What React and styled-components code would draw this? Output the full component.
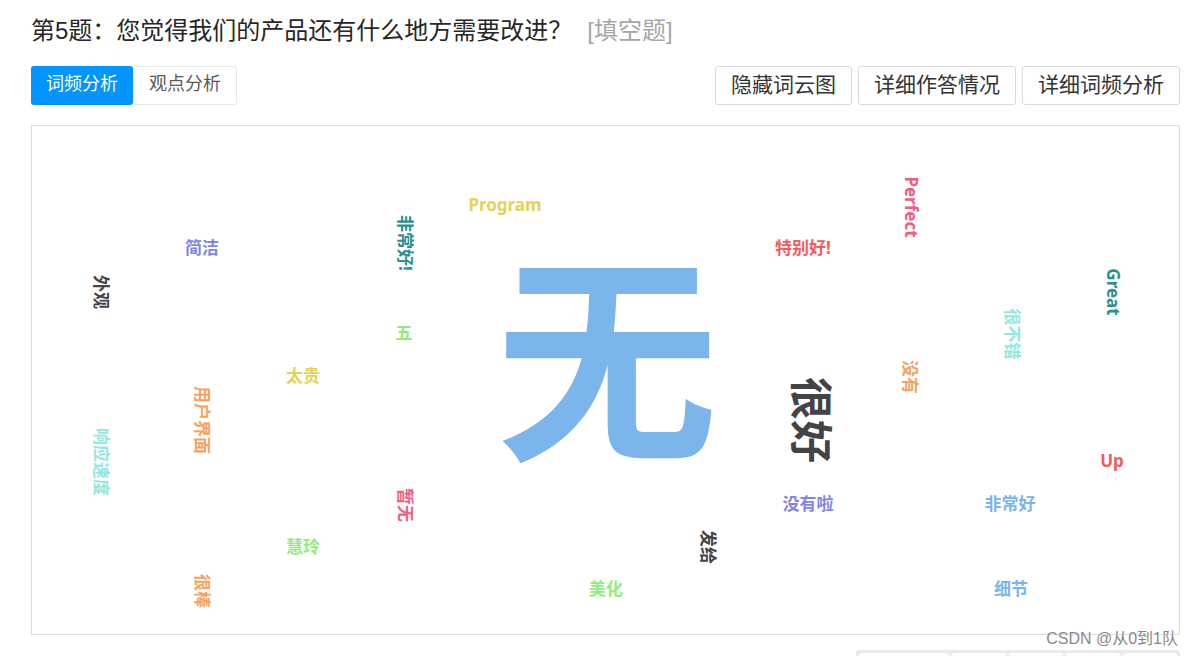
import { useState } from 'react'
import styled, { createGlobalStyle } from 'styled-components'

const GlobalStyle = createGlobalStyle`
  *,
  *::before,
  *::after {
    box-sizing: border-box;
  }

  body {
    background: #fff;
    color: #333;
    font-family: 'Liberation Sans', 'Noto Sans CJK SC', sans-serif;
    margin: 0;
  }

  button {
    font-family: inherit;
  }
`

const Page = styled.main`
  display: flex;
  flex-direction: column;
  height: 100vh;
  overflow: hidden;
  padding: 13px 14px 0 31px;
  position: relative;
`

const Title = styled.h1`
  color: #262626;
  display: flex;
  flex-shrink: 0;
  flex-wrap: wrap;
  font-size: 24px;
  font-weight: 400;
  gap: 15px;
  line-height: 36px;
  margin: 0;
`

const QuestionType = styled.span`
  color: #a6a6a6;
`

const Toolbar = styled.div`
  display: flex;
  flex-shrink: 0;
  flex-wrap: wrap;
  justify-content: space-between;
  margin: 17px 0 20px;
`

const Tabs = styled.div`
  display: flex;
`

const Tab = styled.button`
  background: ${props => props.$active ? '#0095ff' : '#fff'};
  border: ${props => props.$active ? '0' : '1px solid #e6e6e6'};
  border-radius: 3px;
  color: ${props => props.$active ? '#fff' : '#595959'};
  cursor: pointer;
  font-size: 18px;
  height: 39px;
  line-height: 35px;
  padding: 0 15px 2px;
`

const Actions = styled.div`
  display: flex;
  gap: 6px;
`

const ActionButton = styled.button`
  background: #fff;
  border: 1px solid #d9d9d9;
  border-radius: 3px;
  color: #333;
  cursor: pointer;
  font-size: 21px;
  height: 39px;
  line-height: 35px;
  padding: 0 15px 2px;
`

const CloudPanel = styled.section`
  border: 1px solid #dcdcdc;
  flex-shrink: 0;
`

const Cloud = styled.svg`
  display: block;
  width: 100%;
`

const Word = styled.text`
  fill: ${props => props.$color};
  font-family: 'Noto Sans', 'Noto Sans CJK SC', sans-serif;
  font-size: ${props => props.$size}px;
  font-weight: 700;
  text-anchor: middle;
`

const ChartTypes = styled.div`
  align-self: flex-end;
  background: #ebebeb;
  border-radius: 3px;
  display: flex;
  flex-shrink: 0;
  gap: 3px;
  margin-top: 15px;
  padding: 3px;
`

const ChartType = styled.button`
  background: #fff;
  border: 0;
  border-radius: 3px;
  height: 36px;
  padding: 0;
  width: ${props => props.$wide ? 90 : 54}px;
`

const Watermark = styled.span`
  bottom: 5px;
  color: #888;
  font-size: 16px;
  line-height: 24px;
  position: absolute;
  right: 16px;
  text-shadow: 0 0 1px #fff;
`

const tabs = ['词频分析', '观点分析']
const chartTypes = ['表格', '饼状', '圆环', '柱状', '条形']

const words = [
  { text: '无', x: 575, y: 235, size: 222, color: '#7cb5ec' },
  { text: '很好', x: 779, y: 294, size: 43, color: '#434348', vertical: true },
  { text: '美化', x: 574, y: 463, color: '#90ed7d' },
  { text: '用户界面', x: 170, y: 294, color: '#f7a35c', vertical: true },
  { text: '没有啦', x: 776, y: 378, color: '#8085e9' },
  { text: '暂无', x: 373, y: 379, color: '#f15c80', vertical: true },
  { text: 'Program', x: 473, y: 79, color: '#e4d354' },
  { text: '非常好!', x: 373, y: 117, color: '#2b908f', vertical: true },
  { text: '特别好!', x: 771, y: 122, color: '#f45b5b' },
  { text: '很不错', x: 980, y: 208, color: '#91e8e1', vertical: true },
  { text: '非常好', x: 978, y: 378, color: '#7cb5ec' },
  { text: '发给', x: 676, y: 421, color: '#434348', vertical: true },
  { text: '五', x: 372, y: 207, color: '#90ed7d' },
  { text: '没有', x: 878, y: 251, color: '#f7a35c', vertical: true },
  { text: '简洁', x: 170, y: 122, color: '#8085e9' },
  { text: 'Perfect', x: 879, y: 81, color: '#f15c80', vertical: true },
  { text: '太贵', x: 271, y: 250, color: '#e4d354' },
  { text: 'Great', x: 1081, y: 166, color: '#2b908f', vertical: true },
  { text: 'Up', x: 1080, y: 335, color: '#f45b5b' },
  { text: '响应速度', x: 69, y: 336, color: '#91e8e1', vertical: true },
  { text: '细节', x: 979, y: 463, color: '#7cb5ec' },
  { text: '外观', x: 69, y: 166, color: '#434348', vertical: true },
  { text: '慧玲', x: 271, y: 421, color: '#90ed7d' },
  { text: '很棒', x: 170, y: 465, color: '#f7a35c', vertical: true }
]

function WordCloud () {
  return (
    <Cloud viewBox='0 0 1147 508' role='img' aria-label='词云图'>
      {words.map(({ text, x, y, size = 17, color, vertical }) => (
        <Word
          key={text + x}
          $color={color}
          $size={size}
          dy='0.37em'
          transform={`translate(${x} ${y})${vertical ? ' rotate(90)' : ''}`}
        >
          {text}
        </Word>
      ))}
    </Cloud>
  )
}

export default function App () {
  const [activeTab, setActiveTab] = useState(tabs[0])

  return (
    <>
      <GlobalStyle />
      <Page lang='zh-CN'>
        <Title>
          <span>第5题：您觉得我们的产品还有什么地方需要改进？</span>
          <QuestionType>[填空题]</QuestionType>
        </Title>
        <Toolbar>
          <Tabs>
            {tabs.map(tab => (
              <Tab
                key={tab}
                type='button'
                $active={tab === activeTab}
                aria-pressed={tab === activeTab}
                onClick={() => setActiveTab(tab)}
              >
                {tab}
              </Tab>
            ))}
          </Tabs>
          <Actions>
            <ActionButton type='button'>隐藏词云图</ActionButton>
            <ActionButton type='button'>详细作答情况</ActionButton>
            <ActionButton type='button'>详细词频分析</ActionButton>
          </Actions>
        </Toolbar>
        <CloudPanel>
          <WordCloud />
        </CloudPanel>
        <ChartTypes>
          {chartTypes.map((type, i) => (
            <ChartType key={type} type='button' $wide={i === 0} aria-label={type} />
          ))}
        </ChartTypes>
        <Watermark>CSDN @从0到1队</Watermark>
      </Page>
    </>
  )
}
